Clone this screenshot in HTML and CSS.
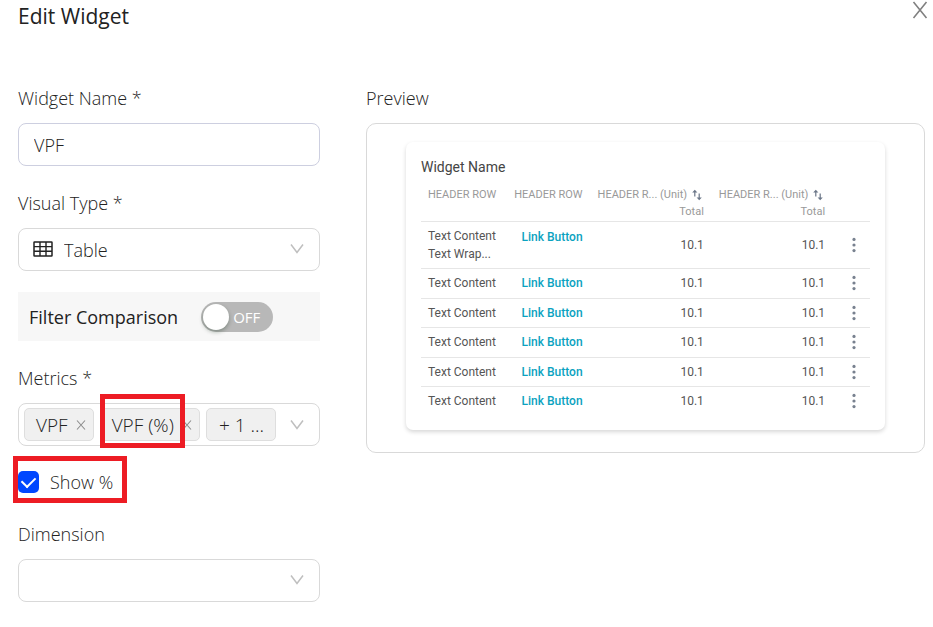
FILE: index.html
```html
<!DOCTYPE html>
<html lang="en">
<head>
    <meta charset="UTF-8">
    <meta name="viewport" content="width=device-width, initial-scale=1.0">
    <title>Edit Widget</title>
    <link rel="stylesheet" href="styles.css">
</head>
<body>
    <!-- Shared icons -->
    <svg class="icon-defs" aria-hidden="true">
        <symbol id="chevron" viewBox="0 0 14 12">
            <path d="M1 1.5 L7 9.5 L13 1.5" fill="none" stroke="#bfbfbf" stroke-width="1.5"/>
        </symbol>
        <symbol id="cross" viewBox="0 0 10 10">
            <path d="M1 0.5 L9 9.5 M9 0.5 L1 9.5" fill="none" stroke="#8c8c8c" stroke-width="1.1"/>
        </symbol>
        <symbol id="sort" viewBox="0 0 10 12">
            <path d="M2.8 7.5 V2 M7.2 4.5 V10" fill="none" stroke="#6b7688" stroke-width="1.2"/>
            <path d="M0.2 3.6 L2.8 0.8 L5.4 3.6 Z M4.6 8.4 L7.2 11.2 L9.8 8.4 Z" fill="#6b7688"/>
        </symbol>
        <symbol id="dots" viewBox="0 0 4 16">
            <g fill="#78818f"><circle cx="2" cy="2.4" r="1.6"/><circle cx="2" cy="8" r="1.6"/><circle cx="2" cy="13.6" r="1.6"/></g>
        </symbol>
    </svg>

    <header class="modal-header">
        <h1>Edit Widget</h1>
        <button class="close-btn" type="button" aria-label="Close">
            <svg viewBox="0 0 18 18"><path d="M2.5 1 L15.5 17 M15.5 1 L2.5 17" fill="none" stroke="#808080" stroke-width="1.6"/></svg>
        </button>
    </header>

    <main class="modal-body">
        <form class="form">
            <div class="field">
                <label for="widgetName">Widget Name *</label>
                <input class="control" id="widgetName" type="text" value="VPF">
            </div>

            <div class="field">
                <label for="visualType">Visual Type *</label>
                <div class="select-wrap">
                    <svg class="table-icon" viewBox="0 0 20 16">
                        <rect x="1" y="1" width="18" height="14" rx="0.5" fill="none" stroke="#222" stroke-width="1.5"/>
                        <path d="M1 5.6 H19 M1 10.3 H19 M7 1 V15 M13 1 V15" fill="none" stroke="#222" stroke-width="1.4"/>
                    </svg>
                    <select class="control with-icon" id="visualType">
                        <option>Table</option>
                    </select>
                    <svg class="chevron"><use href="#chevron"/></svg>
                </div>
            </div>

            <div class="filter-bar">
                <label for="filterComparison">Filter Comparison</label>
                <div class="switch">
                    <input id="filterComparison" type="checkbox" role="switch">
                    <span class="switch-text">OFF</span>
                </div>
            </div>

            <div class="field">
                <label for="metricsToggle">Metrics *</label>
                <div class="control tags">
                    <span class="tag">VPF
                        <button type="button" aria-label="Remove VPF"><svg><use href="#cross"/></svg></button>
                    </span>
                    <span class="tag marked marked-tag">VPF (%)
                        <button type="button" aria-label="Remove VPF (%)"><svg><use href="#cross"/></svg></button>
                    </span>
                    <span class="tag tag-more">+ 1 ...</span>
                    <button class="tags-toggle" id="metricsToggle" type="button">
                        <svg class="chevron"><use href="#chevron"/></svg>
                    </button>
                </div>
            </div>

            <label class="check marked marked-check">
                <input type="checkbox" checked>
                Show %
            </label>

            <div class="field">
                <label for="dimension">Dimension</label>
                <div class="select-wrap">
                    <select class="control" id="dimension">
                        <option></option>
                    </select>
                    <svg class="chevron"><use href="#chevron"/></svg>
                </div>
            </div>
        </form>

        <section class="preview">
            <h2>Preview</h2>
            <div class="preview-frame">
                <div class="widget">
                    <h3>Widget Name</h3>
                    <table>
                        <thead>
                            <tr>
                                <th class="col-text">HEADER ROW</th>
                                <th class="col-link">HEADER ROW</th>
                                <th class="col-num">HEADER R... (Unit) <svg class="sort"><use href="#sort"/></svg><br>Total</th>
                                <th class="col-num">HEADER R... (Unit) <svg class="sort"><use href="#sort"/></svg><br>Total</th>
                                <th class="col-menu"></th>
                            </tr>
                        </thead>
                        <tbody>
                            <tr class="tall">
                                <td>Text Content<br>Text Wrap...</td>
                                <td class="link"><a href="#">Link Button</a></td>
                                <td class="num">10.1</td>
                                <td class="num">10.1</td>
                                <td class="menu"><button type="button" aria-label="Row menu"><svg><use href="#dots"/></svg></button></td>
                            </tr>
                            <tr>
                                <td>Text Content</td>
                                <td class="link"><a href="#">Link Button</a></td>
                                <td class="num">10.1</td>
                                <td class="num">10.1</td>
                                <td class="menu"><button type="button" aria-label="Row menu"><svg><use href="#dots"/></svg></button></td>
                            </tr>
                            <tr>
                                <td>Text Content</td>
                                <td class="link"><a href="#">Link Button</a></td>
                                <td class="num">10.1</td>
                                <td class="num">10.1</td>
                                <td class="menu"><button type="button" aria-label="Row menu"><svg><use href="#dots"/></svg></button></td>
                            </tr>
                            <tr>
                                <td>Text Content</td>
                                <td class="link"><a href="#">Link Button</a></td>
                                <td class="num">10.1</td>
                                <td class="num">10.1</td>
                                <td class="menu"><button type="button" aria-label="Row menu"><svg><use href="#dots"/></svg></button></td>
                            </tr>
                            <tr>
                                <td>Text Content</td>
                                <td class="link"><a href="#">Link Button</a></td>
                                <td class="num">10.1</td>
                                <td class="num">10.1</td>
                                <td class="menu"><button type="button" aria-label="Row menu"><svg><use href="#dots"/></svg></button></td>
                            </tr>
                            <tr>
                                <td>Text Content</td>
                                <td class="link"><a href="#">Link Button</a></td>
                                <td class="num">10.1</td>
                                <td class="num">10.1</td>
                                <td class="menu"><button type="button" aria-label="Row menu"><svg><use href="#dots"/></svg></button></td>
                            </tr>
                        </tbody>
                    </table>
                </div>
            </div>
        </section>
    </main>
</body>
</html>
```
FILE: styles.css
```css
* {
    box-sizing: border-box;
}

body {
    margin: 0;
    background-color: #fff;
    color: #222;
    font-family: "Open Sans", "Noto Sans", sans-serif;
    font-size: 18px;
    font-weight: 300;
    line-height: 24px;
}

button {
    display: flex;
    padding: 0;
    border: none;
    background: none;
    cursor: pointer;
}

.icon-defs {
    display: none;
}

.modal-header {
    display: flex;
    justify-content: space-between;
    align-items: flex-start;
    padding: 0 4px 0 18px;
}

.modal-header h1 {
    margin: 4px 0 0;
    font-size: 21px;
    font-weight: 500;
}

.close-btn svg {
    width: 18px;
    height: 18px;
    margin-top: 1px;
}

.modal-body {
    display: grid;
    grid-template-columns: 302fr 559fr;
    column-gap: 46px;
    align-items: start;
    padding: 58px 8px 25px 18px;
}

/* Form */
.form {
    display: flex;
    flex-direction: column;
    gap: 25px;
}

.field {
    display: flex;
    flex-direction: column;
    gap: 13px;
}

.control {
    width: 100%;
    height: 43px;
    padding: 0 15px;
    border: 1px solid #d9d9d9;
    border-radius: 8px;
    background-color: #fff;
    color: #222;
    font: inherit;
    appearance: none;
}

input.control {
    border-color: #cdcfe0;
}

.select-wrap {
    display: flex;
    position: relative;
}

.with-icon {
    padding-left: 45px;
}

.table-icon {
    position: absolute;
    left: 15px;
    top: 13px;
    width: 20px;
    height: 16px;
}

.chevron {
    width: 14px;
    height: 12px;
}

.select-wrap .chevron {
    position: absolute;
    right: 16px;
    top: 15px;
    pointer-events: none;
}

.filter-bar {
    display: flex;
    align-items: center;
    gap: 23px;
    height: 49px;
    margin-top: -4px;
    padding: 0 11px;
    background-color: #f7f7f7;
    font-weight: 500;
    white-space: nowrap;
}

.switch {
    display: grid;
    align-items: center;
}

.switch input,
.switch-text {
    grid-area: 1 / 1;
}

.switch input {
    width: 72px;
    height: 30px;
    margin: 0;
    padding: 2px;
    border-radius: 15px;
    background-color: #b8b8b8;
    appearance: none;
    cursor: pointer;
}

.switch input::before {
    content: "";
    display: block;
    width: 26px;
    height: 26px;
    border-radius: 50%;
    background-color: #fff;
    box-shadow: 0 2px 4px rgba(0, 35, 11, 0.3);
}

.switch-text {
    padding-left: 32px;
    color: #fff;
    font-size: 15px;
    font-weight: 400;
    pointer-events: none;
}

/* Metrics tags */
.tags {
    display: flex;
    align-items: center;
    gap: 6px;
    padding: 0 15px 0 5px;
}

.tag {
    display: flex;
    align-items: center;
    gap: 8px;
    height: 33px;
    padding: 0 7px 0 11px;
    border: 1px solid #dedede;
    border-radius: 5px;
    background-color: #f0f0f0;
    font-size: 19px;
    white-space: nowrap;
}

.tag svg {
    width: 10px;
    height: 10px;
}

.tag-more {
    padding: 0 11px 0 12px;
}

.tags-toggle {
    margin-left: auto;
}

.check {
    display: flex;
    align-items: center;
    align-self: flex-start;
    gap: 11px;
    margin: -1px 0 3px;
}

.check input {
    display: grid;
    place-items: center;
    width: 21px;
    height: 22px;
    margin: 0;
    border-radius: 5px;
    background-color: #0047ff;
    appearance: none;
}

.check input:checked::before {
    content: "";
    width: 7px;
    height: 11px;
    margin-bottom: 3px;
    border: solid #fff;
    border-width: 0 2px 2px 0;
    transform: rotate(45deg);
}

/* Red call-out boxes */
.marked {
    position: relative;
}

.marked::after {
    content: "";
    position: absolute;
    border: 5px solid #ed1c24;
    pointer-events: none;
}

.marked-tag::after {
    inset: -15px 14px -8px -1px;
}

.marked-check::after {
    inset: -14px -14px -9px -5px;
}

/* Preview */
.preview h2 {
    margin: 0 0 13px;
    font-size: 18px;
    font-weight: 300;
}

.preview-frame {
    padding: 18px 39px 22px;
    border: 1px solid #d9d9d9;
    border-radius: 10px;
}

.widget {
    padding: 16px 15px 14px;
    border-radius: 7px;
    box-shadow: 0 2px 4px rgba(0, 0, 0, 0.16);
    color: #555;
    font-family: Roboto, sans-serif;
    font-size: 12px;
    font-weight: 400;
    line-height: 18px;
}

.widget h3 {
    margin: 0 0 10px;
    color: #444;
    font-size: 14px;
    font-weight: 400;
}

.widget table {
    width: 100%;
    table-layout: fixed;
    border-collapse: collapse;
}

.widget th {
    height: 35px;
    padding: 0;
    color: #999;
    font-size: 11px;
    font-weight: 400;
    line-height: 17px;
    text-align: right;
    vertical-align: top;
    white-space: nowrap;
}

.widget td {
    height: 29px;
    padding: 0;
    border-top: 1px solid #e6e6e6;
}

.widget tr:nth-child(even) td {
    height: 30px;
}

.widget .tall td {
    height: 47px;
}

.widget .tall .link {
    padding-top: 6px;
    vertical-align: top;
}

.widget .col-text {
    width: 19%;
    text-align: left;
}

.widget th:first-child,
.widget td:first-child {
    padding-left: 7px;
}

.col-link {
    width: 17%;
}

.col-num {
    width: 27%;
}

.link,
.num {
    text-align: right;
}

.link a {
    color: #0aa2c0;
    font-weight: 500;
    text-decoration: none;
}

.menu button {
    margin-left: auto;
    margin-right: 14px;
}

.menu svg {
    width: 4px;
    height: 16px;
}

.sort {
    width: 10px;
    height: 12px;
    margin: 0 2px;
    vertical-align: middle;
}
```
